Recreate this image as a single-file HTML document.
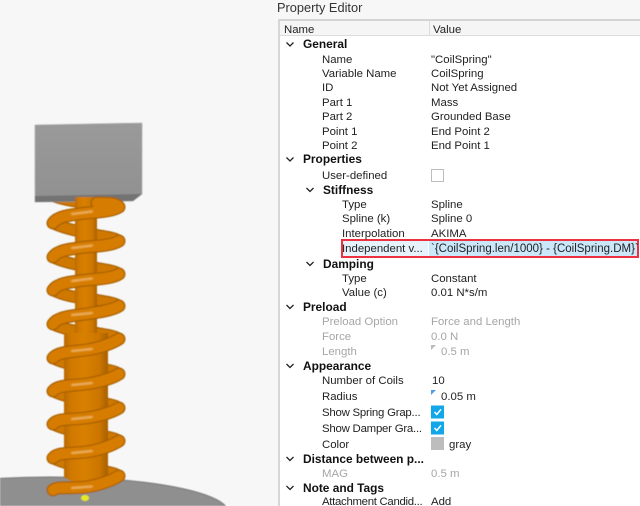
<!DOCTYPE html>
<html>
<head>
<meta charset="utf-8">
<style>
html,body{margin:0;padding:0;width:640px;height:506px;overflow:hidden}
body{position:relative;background:#f7f7f7;font-family:"Liberation Sans",sans-serif;font-size:11.4px;color:#222}
#clip{position:absolute;left:0;top:0;width:640px;height:506px;overflow:hidden}
svg.a{position:absolute;left:0;top:0}
#panel{position:absolute;left:279px;top:36px;width:361px;height:470px;background:#fff}
#head{position:absolute;left:279px;top:19px;width:361px;height:17px;background:#f5f5f5;border-top:2px solid #d4d4d4;border-bottom:1px solid #dcdcdc;box-sizing:border-box}
#ledge{position:absolute;left:278px;top:19px;width:2px;height:487px;background:#d6d6d6}
#hdiv{position:absolute;left:429px;top:21px;width:1px;height:15px;background:#dcdcdc}
.t{position:absolute;line-height:14px;height:14px;white-space:nowrap;margin-top:1px}
.b{font-weight:bold;font-size:11.9px;color:#111;margin-top:0}
.g{color:#a6a6a6}
.e{letter-spacing:-.22px}
</style>
</head>
<body>
<div id="clip">
<svg class="a" width="278" height="506" viewBox="0 0 278 506">
<defs>
<linearGradient id="rod" x1="0" x2="1" y1="0" y2="0">
<stop offset="0" stop-color="#b86a00"/><stop offset=".15" stop-color="#d07800"/><stop offset=".45" stop-color="#d98000"/><stop offset=".8" stop-color="#cc7600"/><stop offset="1" stop-color="#a86000"/>
</linearGradient>
<linearGradient id="box" x1="0" x2="0" y1="0" y2="1">
<stop offset="0" stop-color="#9a9a9a"/><stop offset="1" stop-color="#909090"/>
</linearGradient>
<filter id="soft" filterUnits="userSpaceOnUse" x="0" y="100" width="278" height="406"><feGaussianBlur stdDeviation="0.4"/></filter>
<filter id="soft2" x="-20%" y="-20%" width="140%" height="140%"><feGaussianBlur stdDeviation="0.8"/></filter>
<path id="bk" d="M53,196C70,202 85,203 97,203C108,203 116,203 119,207M53,223C60,227 75,231 97,235C108,237 116,238 119,241M53,257C60,261 75,265 97,268C108,270 116,271 119,274M53,290C60,294 75,298 97,300C108,302 116,303 119,306M53,324C60,328 75,332 97,333C108,335 116,336 119,339M53,358C60,362 75,366 97,368C108,370 116,371 119,374M53,391C60,395 75,399 97,402C108,404 116,405 119,408M53,424C60,428 75,432 97,435C108,437 116,438 119,441M53,458C60,462 75,466 97,470C108,472 116,473 119,476"/>
<path id="fr" d="M97,203C108,203 116,203 119,207M119,207C113,211 100,212 86,213C70,215 58,216 53,223M119,241C113,245 100,246 86,247C70,249 58,250 53,257M119,274C113,278 100,279 86,280C70,282 58,283 53,290M119,306C113,310 100,312 86,314C70,316 58,317 53,324M119,339C113,343 100,348 86,350C70,352 58,352 53,358M119,374C113,378 100,382 86,384C70,386 58,385 53,391M119,408C113,412 100,416 86,418C70,420 58,418 53,424M119,441C113,445 100,450 86,452C70,454 58,452 53,458M119,476C113,480 100,485 86,487C70,489 58,486 53,490"/>
</defs>
<g filter="url(#soft)">
<path d="M0,506V478.400A178,35 0 0 1 225.400,506Z" fill="#8f8f8f"/>
<path d="M0,478.400A178,35 0 0 1 225.400,506" fill="none" stroke="#777" stroke-width="1"/>
<ellipse cx="85" cy="498" rx="4" ry="3" fill="#e8e820"/>
<g fill="none" stroke-linecap="round">
<use href="#bk" stroke="#a86000" stroke-width="12"/>
<use href="#bk" stroke="#cf7800" stroke-width="9.500"/>
</g>
<rect x="75" y="195" width="22" height="140" fill="url(#rod)"/>
<path d="M64,333H108V477C100,485 72,485 64,477Z" fill="url(#rod)"/>
<polygon points="35,125 142,123 142,194 133,201 35,202" fill="url(#box)" stroke="#aaa" stroke-width=".6"/>
<polygon points="35,196 142,194 133,201 35,202" fill="#737373"/>
<rect x="75" y="197" width="22" height="10" fill="url(#rod)"/>
<g fill="none" stroke-linecap="round">
<use href="#fr" stroke="#a86000" stroke-width="13"/>
<use href="#fr" stroke="#d67c00" stroke-width="10.500"/>
</g>
<g fill="none" stroke="#f0b870" stroke-width="2" stroke-linecap="round" filter="url(#soft2)">
<path d="M72,214L92,211.500M72,248L92,245.500M72,281L92,278.500M72,315L92,313M72,351L92,349M72,385L92,383M72,419L92,417M72,453L92,451M72,488L92,486.500"/>
</g>
</g>
</svg>

<div id="panel"></div>
<div id="head"></div>
<div id="ledge"></div>
<div id="hdiv"></div>

<div class="t" style="left:277px;top:0;font-size:12.800px;color:#333">Property Editor</div>
<div class="t" style="left:284px;top:22px">Name</div>
<div class="t" style="left:433px;top:22px">Value</div>

<div style="position:absolute;left:342px;top:240px;width:86px;height:16px;background:#e6f3fc"></div>
<div style="position:absolute;left:429px;top:240px;width:209px;height:16px;background:#cbe8fb"></div>
<div style="position:absolute;left:341px;top:239px;width:298px;height:19px;border:2.500px solid #ee3140;box-sizing:border-box"></div>

<svg class="a" width="640" height="506" viewBox="0 0 640 506" fill="none" stroke="#222" stroke-width="1.300">
<path d="M286.500,42.500L290,46L293.500,42.500M286.500,157.500L290,161L293.500,157.500M306.500,188L310,191.500L313.500,188M306.500,262L310,265.500L313.500,262M286.500,305L290,308.500L293.500,305M286.500,364L290,367.500L293.500,364M286.500,457L290,460.500L293.500,457M286.500,486L290,489.500L293.500,486"/>
</svg>

<div class="t b" style="left:303px;top:37px">General</div>
<div class="t" style="left:322px;top:52px">Name</div><div class="t" style="left:431px;top:52px">"CoilSpring"</div>
<div class="t" style="left:322px;top:66px">Variable Name</div><div class="t" style="left:431px;top:66px">CoilSpring</div>
<div class="t" style="left:322px;top:80px">ID</div><div class="t" style="left:431px;top:80px">Not Yet Assigned</div>
<div class="t" style="left:322px;top:95px">Part 1</div><div class="t" style="left:431px;top:95px">Mass</div>
<div class="t" style="left:322px;top:109px">Part 2</div><div class="t" style="left:431px;top:109px">Grounded Base</div>
<div class="t" style="left:322px;top:124px">Point 1</div><div class="t" style="left:431px;top:124px">End Point 2</div>
<div class="t" style="left:322px;top:138px">Point 2</div><div class="t" style="left:431px;top:138px">End Point 1</div>
<div class="t b" style="left:303px;top:152px">Properties</div>
<div class="t" style="left:322px;top:168px">User-defined</div>
<div style="position:absolute;left:431px;top:169px;width:13px;height:13px;border:1px solid #bdbdbd;box-sizing:border-box;background:#fff"></div>
<div class="t b" style="left:323px;top:183px">Stiffness</div>
<div class="t" style="left:342px;top:197px">Type</div><div class="t" style="left:431px;top:197px">Spline</div>
<div class="t" style="left:342px;top:211px">Spline (k)</div><div class="t" style="left:431px;top:211px">Spline 0</div>
<div class="t" style="left:342px;top:226px">Interpolation</div><div class="t" style="left:431px;top:226px">AKIMA</div>
<div class="t" style="left:342px;top:241px">Independent v...</div>
<div class="t" style="left:431px;top:241px;font-size:11.500px">`{CoilSpring.len/1000} - {CoilSpring.DM}`</div>
<div class="t b" style="left:323px;top:257px">Damping</div>
<div class="t" style="left:342px;top:271px">Type</div><div class="t" style="left:431px;top:271px">Constant</div>
<div class="t" style="left:342px;top:285px">Value (c)</div><div class="t" style="left:431px;top:285px">0.01 N*s/m</div>
<div class="t b" style="left:303px;top:300px">Preload</div>
<div class="t g" style="left:322px;top:314px">Preload Option</div><div class="t g" style="left:431px;top:314px">Force and Length</div>
<div class="t g" style="left:322px;top:329px">Force</div><div class="t g" style="left:431px;top:329px">0.0 N</div>
<div class="t g" style="left:322px;top:344px">Length</div><div class="t g" style="left:441px;top:344px">0.5 m</div>
<div style="position:absolute;left:431px;top:345px;width:0;height:0;border-top:5px solid #bbb;border-right:5px solid transparent"></div>
<div class="t b" style="left:303px;top:359px">Appearance</div>
<div class="t" style="left:322px;top:373px">Number of Coils</div><div class="t" style="left:432px;top:373px">10</div>
<div class="t" style="left:322px;top:389px">Radius</div><div class="t" style="left:441px;top:389px">0.05 m</div>
<div style="position:absolute;left:431px;top:390px;width:0;height:0;border-top:5px solid #4a9ff0;border-right:5px solid transparent"></div>
<div class="t e" style="left:322px;top:405px">Show Spring Grap...</div>
<div class="t e" style="left:322px;top:421px">Show Damper Gra...</div>
<svg class="a" width="640" height="506" viewBox="0 0 640 506">
<rect x="431" y="405.500" width="13" height="13" fill="#12a7e8"/>
<path d="M434.500,412L436.800,414.500L441,409.300" fill="none" stroke="#fff" stroke-width="1.500"/>
<rect x="431" y="421.500" width="13" height="13" fill="#12a7e8"/>
<path d="M434.500,428L436.800,430.500L441,425.300" fill="none" stroke="#fff" stroke-width="1.500"/>
<rect x="431" y="437" width="13" height="13" fill="#bdbdbd"/>
</svg>
<div class="t" style="left:322px;top:437px">Color</div><div class="t" style="left:449px;top:437px">gray</div>
<div class="t b" style="left:303px;top:452px">Distance between p...</div>
<div class="t g" style="left:322px;top:466px">MAG</div><div class="t g" style="left:431px;top:466px">0.5 m</div>
<div class="t b" style="left:303px;top:481px">Note and Tags</div>
<div class="t" style="left:322px;top:497px;margin:0;height:9px;line-height:10px;overflow:hidden;letter-spacing:-.3px">Attachment Candid...</div><div class="t" style="left:431px;top:497px;margin:0;height:9px;line-height:10px;overflow:hidden">Add</div>
</div>
</body>
</html>
